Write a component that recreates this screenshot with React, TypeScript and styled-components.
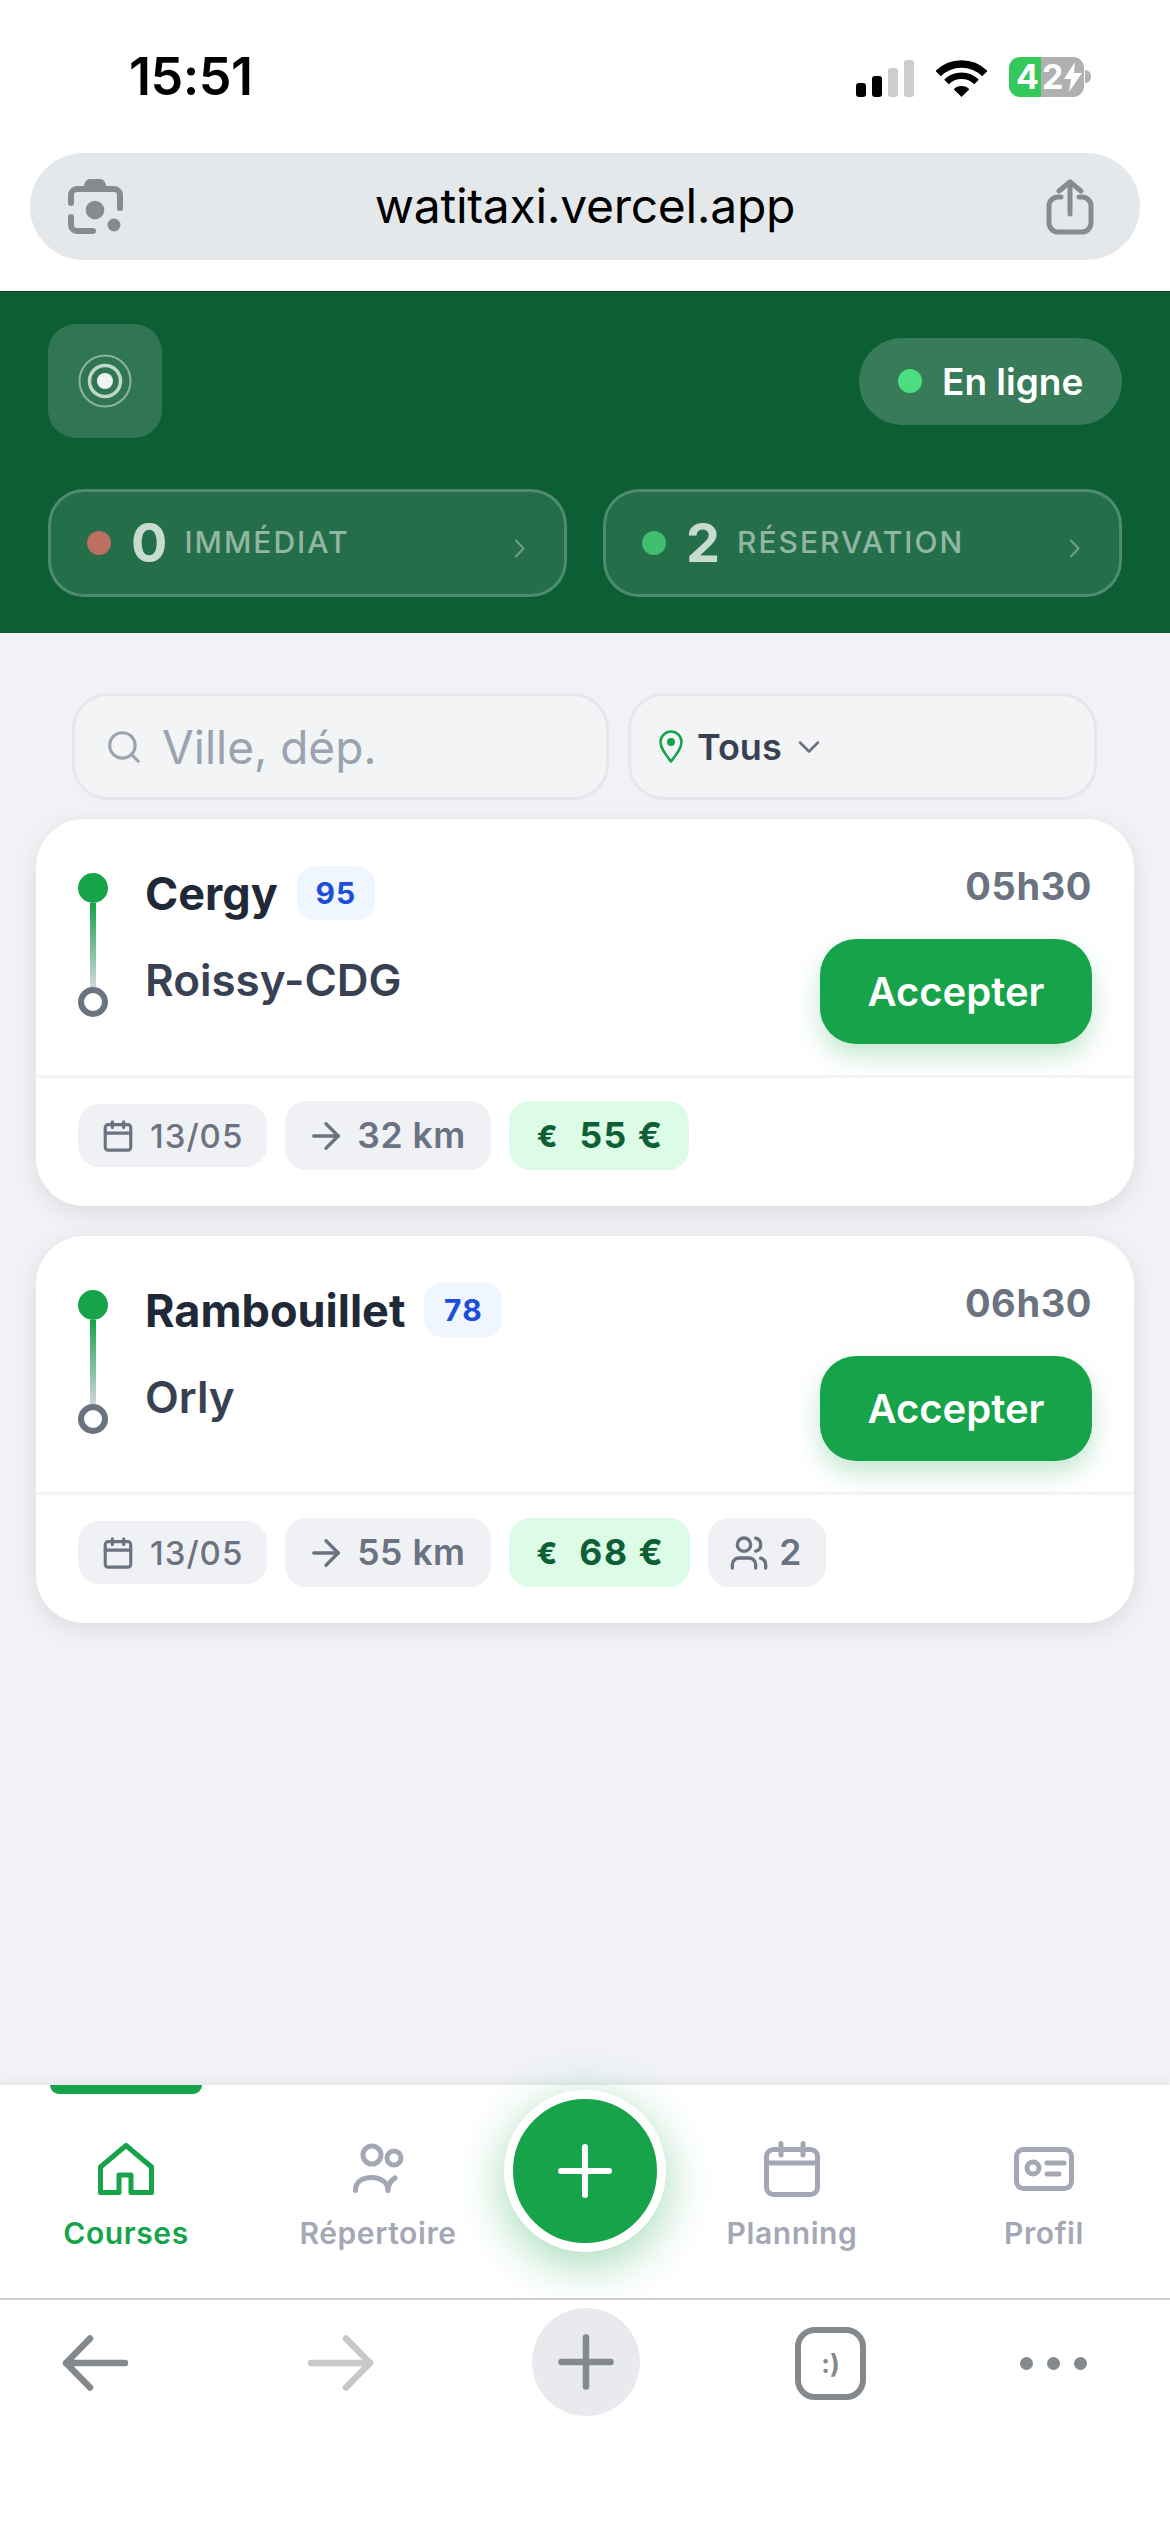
import React from "react";
import styled, { createGlobalStyle } from "styled-components";
import { ArrowRight, Calendar, ChevronDown, Search, Users } from "lucide-react";

const Global = createGlobalStyle`
  html, body { margin: 0; padding: 0; background: #fff; }
  * { box-sizing: border-box; }
  body { font-family: Inter, "Liberation Sans", sans-serif; }
`;

const Page = styled.div`
  width: 1170px;
  height: 2532px;
  display: flex;
  flex-direction: column;
  overflow: hidden;
  background: #fff;
`;

const StatusBar = styled.div`
  height: 153px;
  flex: none;
  display: flex;
  align-items: center;
  justify-content: space-between;
  padding: 0 79px 0 129px;
`;
const Clock = styled.div`
  font-size: 52px;
  font-weight: 600;
  color: #000;
  letter-spacing: -0.5px;
`;
const StatusIcons = styled.div`
  display: flex;
  align-items: flex-end;
  gap: 22px;
`;
const Signal = styled.div`
  display: flex;
  align-items: flex-end;
  gap: 6px;
  height: 37px;
`;
const SignalBar = styled.span<{ $h: number; $on?: boolean }>`
  width: 10px;
  height: ${(p) => p.$h}px;
  border-radius: 3px;
  background: ${(p) => (p.$on ? "#000" : "#cdcdcd")};
`;
const Battery = styled.div`
  display: flex;
  align-items: center;
  height: 40px;
`;
const BatteryLeft = styled.div`
  width: 32px;
  height: 40px;
  background: #34c759;
  border-radius: 11px 0 0 11px;
  color: #fff;
  font-size: 34px;
  font-weight: 700;
  line-height: 40px;
  padding-left: 7px;
`;
const BatteryRight = styled.div`
  width: 43px;
  height: 40px;
  background: #b0b0b0;
  border-radius: 0 11px 11px 0;
  color: #fff;
  font-size: 34px;
  font-weight: 700;
  line-height: 40px;
  display: flex;
  align-items: center;
  padding-left: 1px;
`;
const BatteryNub = styled.div`
  width: 6px;
  height: 13px;
  margin-left: 1px;
  border-radius: 0 6px 6px 0;
  background: #b0b0b0;
`;

const UrlWrap = styled.div`
  flex: none;
  padding: 0 30px 31px;
`;
const UrlBar = styled.div`
  height: 107px;
  border-radius: 54px;
  background: #e5e8eb;
  display: grid;
  grid-template-columns: 1fr auto 1fr;
  align-items: center;
  padding: 0 46px;
`;
const UrlLeft = styled.div`
  justify-self: start;
  display: flex;
  margin-left: -8px;
`;
const UrlText = styled.div`
  font-size: 48px;
  font-weight: 400;
  color: #000;
  letter-spacing: -0.3px;
  margin-top: -2px;
`;
const UrlRight = styled.div`
  justify-self: end;
  display: flex;
`;

const Header = styled.header`
  flex: none;
  background: #0c5f35;
  border-top: 1px solid #0a4327;
  padding: 32px 48px 36px;
`;
const HeaderTop = styled.div`
  display: flex;
  align-items: center;
  justify-content: space-between;
`;
const Logo = styled.div`
  width: 114px;
  height: 114px;
  border-radius: 28px;
  background: rgba(255, 255, 255, 0.15);
  display: flex;
  align-items: center;
  justify-content: center;
`;
const OnlinePill = styled.div`
  height: 87px;
  width: 263px;
  border-radius: 44px;
  background: rgba(255, 255, 255, 0.18);
  display: flex;
  align-items: center;
  padding-left: 39px;
  gap: 20px;
  color: #fff;
  font-size: 37px;
  font-weight: 600;
`;
const Dot = styled.span<{ $c: string; $s: number }>`
  width: ${(p) => p.$s}px;
  height: ${(p) => p.$s}px;
  border-radius: 50%;
  background: ${(p) => p.$c};
  flex: none;
`;
const Stats = styled.div`
  display: grid;
  grid-template-columns: 1fr 1fr;
  gap: 36px;
  margin-top: 51px;
`;
const StatCard = styled.div`
  height: 108px;
  border-radius: 36px;
  border: 3px solid rgba(255, 255, 255, 0.2);
  background: rgba(255, 255, 255, 0.1);
  display: flex;
  align-items: center;
  padding: 0 39px 0 36px;
`;
const StatNumber = styled.span`
  font-size: 54px;
  font-weight: 700;
  color: rgba(255, 255, 255, 0.75);
  margin-left: 20px;
  line-height: 1;
`;
const StatLabel = styled.span`
  font-size: 30px;
  font-weight: 500;
  letter-spacing: 2px;
  color: rgba(255, 255, 255, 0.5);
  margin: -2px 0 0 17px;
`;
const StatChevron = styled.svg`
  margin-left: auto;
  margin-top: 10px;
`;

const Main = styled.main`
  flex: 1;
  min-height: 0;
  background: #f0f2f6;
  padding: 60px 36px 0;
  display: flex;
  flex-direction: column;
`;
const Filters = styled.div`
  display: grid;
  grid-template-columns: 537px 469px;
  gap: 19px;
  padding: 0 36px;
  margin-bottom: 19px;
`;
const SearchBox = styled.div`
  height: 107px;
  border-radius: 36px;
  border: 3px solid #e5e7eb;
  background: #f3f4f6;
  display: flex;
  align-items: center;
  gap: 19px;
  padding-left: 30px;
  color: #9ca3af;
  font-size: 46px;
`;
const SelectBox = styled(SearchBox)`
  gap: 14px;
  padding-left: 28px;
  color: #374151;
  font-size: 36px;
  font-weight: 600;
`;
const CaretWrap = styled.span`
  display: flex;
  margin-left: -5px;
  color: #6b7280;
`;
const Card = styled.article`
  background: #fff;
  border-radius: 48px;
  box-shadow: 0 6px 24px rgba(0, 0, 0, 0.09);
  margin-bottom: 30px;
`;
const CardTop = styled.div`
  height: 259px;
  padding: 47px 42px 0;
  display: flex;
  border-bottom: 3px solid #f3f4f6;
`;
const Route = styled.div`
  width: 30px;
  height: 144px;
  margin-top: 7px;
  display: flex;
  flex-direction: column;
  align-items: center;
  flex: none;
`;
const RouteStart = styled.span`
  width: 30px;
  height: 30px;
  border-radius: 50%;
  background: #16a34a;
  flex: none;
`;
const RouteLine = styled.span`
  width: 6px;
  flex: 1;
  background: linear-gradient(#16a34a, #d1d5db);
`;
const RouteEnd = styled.span`
  width: 30px;
  height: 30px;
  border-radius: 50%;
  border: 6px solid #6b7280;
  background: #fff;
  flex: none;
`;
const Places = styled.div`
  margin-left: 37px;
  flex: 1;
`;
const CityRow = styled.div`
  display: flex;
  align-items: center;
  gap: 19px;
  height: 54px;
`;
const City = styled.span`
  font-size: 45px;
  font-weight: 700;
  color: #1f2937;
`;
const Dept = styled.span`
  height: 54px;
  width: 78px;
  border-radius: 18px;
  background: #eff6ff;
  color: #1d4ed8;
  font-size: 30px;
  font-weight: 700;
  letter-spacing: 1px;
  display: flex;
  align-items: center;
  justify-content: center;
`;
const Destination = styled.div`
  margin-top: 33px;
  height: 54px;
  line-height: 54px;
  font-size: 44px;
  font-weight: 600;
  color: #374151;
`;
const Side = styled.div`
  display: flex;
  flex-direction: column;
  align-items: flex-end;
`;
const Time = styled.div`
  height: 44px;
  line-height: 44px;
  margin-top: -2px;
  font-size: 38px;
  font-weight: 700;
  letter-spacing: 0.6px;
  color: #6b7280;
`;
const Accept = styled.button`
  margin-top: 31px;
  width: 272px;
  height: 105px;
  border: 0;
  border-radius: 36px;
  background: #16a34a;
  color: #fff;
  font-family: inherit;
  font-size: 40px;
  font-weight: 600;
  box-shadow: 0 12px 24px rgba(22, 163, 74, 0.25);
`;
const Tags = styled.div`
  padding: 23px 42px 36px;
  display: flex;
  align-items: center;
  gap: 18px;
`;
const Tag = styled.span`
  height: 69px;
  padding: 0 25px 0 20px;
  border-radius: 21px;
  background: #f0f1f5;
  color: #6b7280;
  display: flex;
  align-items: center;
  gap: 10px;
  font-size: 35.5px;
  font-weight: 600;
  letter-spacing: 0.5px;
`;
const DateTag = styled(Tag)`
  height: 63px;
  padding: 0 24px 0 23px;
  font-size: 33px;
  font-weight: 500;
  letter-spacing: 1px;
  gap: 15px;
`;
const PriceTag = styled(Tag)`
  background: #dcfce7;
  color: #0f5f35;
  font-weight: 700;
  letter-spacing: 1.5px;
  padding: 0 26px 0 28px;
  gap: 22px;
`;
const PeopleTag = styled(Tag)`
  padding: 0 24px 0 21px;
  gap: 10px;
`;
const EuroMark = styled.span`
  font-size: 30px;
  font-weight: 800;
  letter-spacing: 0;
`;

const Nav = styled.nav`
  flex: none;
  height: 213px;
  background: #fff;
  display: flex;
  align-items: flex-start;
  box-shadow: 0 -3px 12px rgba(0, 0, 0, 0.05);
  position: relative;
`;
const NavItem = styled.div<{ $active?: boolean }>`
  flex: 1;
  position: relative;
  padding-top: 56px;
  display: flex;
  flex-direction: column;
  align-items: center;
  color: ${(p) => (p.$active ? "#16a34a" : "#a3a8b4")};
`;
const NavIndicator = styled.span`
  position: absolute;
  top: 0;
  left: 50px;
  width: 152px;
  height: 9px;
  border-radius: 0 0 9px 9px;
  background: #16a34a;
`;
const NavIcon = styled.span`
  height: 56px;
  display: flex;
  align-items: center;
  justify-content: center;
`;
const NavLabel = styled.span`
  margin-top: 18px;
  font-size: 30px;
  line-height: 36px;
  font-weight: 600;
  letter-spacing: 0.6px;
`;
const Fab = styled.button`
  flex: none;
  width: 162px;
  height: 162px;
  margin-top: 5px;
  border-radius: 50%;
  border: 9px solid #fff;
  background: #16a34a;
  padding: 0;
  display: flex;
  align-items: center;
  justify-content: center;
  box-shadow: 0 12px 48px rgba(22, 163, 74, 0.4);
  position: relative;
  z-index: 1;
`;

const Toolbar = styled.div`
  flex: none;
  height: 234px;
  position: relative;
  z-index: 2;
  background: #fff;
  border-top: 2px solid #cfcfcf;
  display: flex;
  align-items: flex-start;
  padding: 8px 0 0 62px;
`;
const ToolSlot = styled.div<{ $gap: number }>`
  height: 108px;
  margin-left: ${(p) => p.$gap}px;
  padding-top: 2px;
  display: flex;
  align-items: center;
`;
const PlusCircle = styled(ToolSlot)`
  width: 108px;
  padding-top: 0;
  border-radius: 50%;
  background: #e9eaee;
  justify-content: center;
`;
const TabsBox = styled.div`
  width: 71px;
  height: 73px;
  border: 6px solid #83898c;
  border-radius: 20px;
  color: #83898c;
  font-size: 26px;
  font-weight: 700;
  display: flex;
  align-items: center;
  justify-content: center;
`;
const MoreSlot = styled(ToolSlot)`
  gap: 14px;
`;
const MoreDot = styled.span`
  width: 13px;
  height: 13px;
  border-radius: 50%;
  background: #83898c;
`;

const BoltIcon = () => (
  <svg width="18" height="30" viewBox="0 0 18 30" style={{ marginLeft: 1 }}>
    <path d="M11 0 L0 17 H7 L5 30 L18 11 H10 Z" fill="#fff" />
  </svg>
);

const WifiIcon = () => (
  <svg width="51" height="37" viewBox="0 0 51 37" fill="none" stroke="#000">
    <path d="M2.2 13.7 A33 33 0 0 1 48.8 13.7" strokeWidth="7.5" />
    <path d="M10.5 22 A21.2 21.2 0 0 1 40.5 22" strokeWidth="6.5" />
    <path d="M25.5 37 L17.7 29.2 A11 11 0 0 1 33.3 29.2 Z" fill="#000" stroke="none" />
  </svg>
);

const LensIcon = () => (
  <svg width="55" height="56" viewBox="0 0 55 56" fill="none" stroke="#858c90" strokeWidth="6" strokeLinecap="round">
    <path d="M3 24 V16 a6 6 0 0 1 6-6 H46 a6 6 0 0 1 6 6 V29" />
    <path d="M3 38 V46 a6 6 0 0 0 6 6 H25" />
    <path d="M15 10 C16 4 18 0 22 0 H32 C36 0 38 4 39 10 Z" fill="#858c90" stroke="none" />
    <circle cx="27" cy="31" r="9.3" fill="#858c90" stroke="none" />
    <circle cx="46" cy="46" r="6.5" fill="#858c90" stroke="none" />
  </svg>
);

const ShareIcon = () => (
  <svg width="48" height="56" viewBox="0 0 48 56" fill="none" stroke="#858c90" strokeWidth="5" strokeLinecap="round" strokeLinejoin="round">
    <path d="M15 18 H12 a9 9 0 0 0 -9 9 V44 a9 9 0 0 0 9 9 H36 a9 9 0 0 0 9 -9 V27 a9 9 0 0 0 -9 -9 H33" />
    <path d="M24 35 V3" />
    <path d="M13 12 L24 3 L35 12" />
  </svg>
);

const RadarIcon = () => (
  <svg width="56" height="56" viewBox="0 0 56 56" fill="none">
    <circle cx="28" cy="28" r="25.5" stroke="#fff" strokeOpacity=".45" strokeWidth="2" />
    <circle cx="28" cy="28" r="15.5" stroke="#fff" strokeOpacity=".7" strokeWidth="3.5" />
    <circle cx="28" cy="28" r="8" fill="#fff" fillOpacity=".92" />
  </svg>
);

const SmallChevron = () => (
  <StatChevron width="11" height="19" viewBox="0 0 11 19" fill="none" stroke="rgba(255,255,255,.35)" strokeWidth="2">
    <path d="M1.5 1 L9.5 9.5 L1.5 18" />
  </StatChevron>
);

const PinIcon = () => (
  <svg width="24" height="33" viewBox="0 0 24 33" fill="none" stroke="#16a34a" strokeWidth="2.5" strokeLinejoin="round">
    <path d="M12 31.5 C7 25 1.5 18.5 1.5 12 A10.5 10.5 0 0 1 22.5 12 C22.5 18.5 17 25 12 31.5 Z" />
    <circle cx="12" cy="12" r="4" fill="#16a34a" stroke="none" />
  </svg>
);

const HomeIcon = () => (
  <svg width="56" height="52" viewBox="0 0 56 52" fill="none" stroke="currentColor" strokeWidth="5" strokeLinejoin="round">
    <path d="M28 2.5 L53.5 24 V49.5 H33 V32 H21 V49.5 H2.5 V24 Z" />
  </svg>
);
const PeopleIcon = () => (
  <svg width="52" height="52" viewBox="0 0 52 52" fill="none" stroke="currentColor" strokeWidth="5" strokeLinecap="round">
    <circle cx="20" cy="12" r="9" />
    <circle cx="42" cy="15" r="7" />
    <path d="M3.5 47.5 C3.5 39 10 34.5 20 34.5 C28 34.5 36 39 36 47.5" />
    <path d="M36 47 C36 42 38 38 43 35" />
  </svg>
);
const PlanIcon = () => (
  <svg width="56" height="56" viewBox="0 0 56 56" fill="none" stroke="currentColor" strokeWidth="5" strokeLinecap="round">
    <rect x="2.5" y="8.5" width="51" height="45" rx="7" />
    <path d="M2.5 22 H53.5" />
    <path d="M17 2.5 V14 M39 2.5 V14" />
  </svg>
);
const ProfileIcon = () => (
  <svg width="60" height="44" viewBox="0 0 60 44" fill="none" stroke="currentColor" strokeWidth="5" strokeLinecap="round">
    <rect x="2.5" y="2.5" width="55" height="39" rx="7" />
    <circle cx="19" cy="21" r="6" />
    <path d="M33 16 H50 M33 27 H45" />
  </svg>
);
const WhitePlus = () => (
  <svg width="54" height="54" viewBox="0 0 54 54" fill="none" stroke="#fff" strokeWidth="6" strokeLinecap="round">
    <path d="M27 3 V51 M3 27 H51" />
  </svg>
);
const BackIcon = ({ color, flip }: { color: string; flip?: boolean }) => (
  <svg width="67" height="56" viewBox="0 0 67 56" fill="none" stroke={color} strokeWidth="6.5" strokeLinecap="round" strokeLinejoin="round" style={flip ? { transform: "scaleX(-1)" } : undefined}>
    <path d="M63 28 H4 M28 3.5 L4 28 L28 52.5" />
  </svg>
);
const GreyPlus = () => (
  <svg width="56" height="56" viewBox="0 0 56 56" fill="none" stroke="#83898c" strokeWidth="6.5" strokeLinecap="round">
    <path d="M28 3.5 V52.5 M3.5 28 H52.5" />
  </svg>
);

type Trip = {
  from: string;
  dept: string;
  to: string;
  time: string;
  km: string;
  price: string;
  people?: string;
};
const trips: Trip[] = [
  { from: "Cergy", dept: "95", to: "Roissy-CDG", time: "05h30", km: "32 km", price: "55 €" },
  { from: "Rambouillet", dept: "78", to: "Orly", time: "06h30", km: "55 km", price: "68 €", people: "2" },
];

const TripCard = ({ trip }: { trip: Trip }) => (
  <Card>
    <CardTop>
      <Route>
        <RouteStart />
        <RouteLine />
        <RouteEnd />
      </Route>
      <Places>
        <CityRow>
          <City>{trip.from}</City>
          <Dept>{trip.dept}</Dept>
        </CityRow>
        <Destination>{trip.to}</Destination>
      </Places>
      <Side>
        <Time>{trip.time}</Time>
        <Accept>Accepter</Accept>
      </Side>
    </CardTop>
    <Tags>
      <DateTag>
        <Calendar size={34} strokeWidth={2.2} />
        13/05
      </DateTag>
      <Tag>
        <ArrowRight size={42} strokeWidth={1.9} />
        {trip.km}
      </Tag>
      <PriceTag>
        <EuroMark>€</EuroMark>
        {trip.price}
      </PriceTag>
      {trip.people && (
        <PeopleTag>
          <Users size={40} strokeWidth={2} />
          {trip.people}
        </PeopleTag>
      )}
    </Tags>
  </Card>
);

export default function App() {
  return (
    <Page>
      <Global />
      <StatusBar>
        <Clock>15:51</Clock>
        <StatusIcons>
          <Signal>
            <SignalBar $h={14} $on />
            <SignalBar $h={21} $on />
            <SignalBar $h={29} />
            <SignalBar $h={37} />
          </Signal>
          <WifiIcon />
          <Battery>
            <BatteryLeft>4</BatteryLeft>
            <BatteryRight>
              2
              <BoltIcon />
            </BatteryRight>
            <BatteryNub />
          </Battery>
        </StatusIcons>
      </StatusBar>
      <UrlWrap>
        <UrlBar>
          <UrlLeft>
            <LensIcon />
          </UrlLeft>
          <UrlText>watitaxi.vercel.app</UrlText>
          <UrlRight>
            <ShareIcon />
          </UrlRight>
        </UrlBar>
      </UrlWrap>
      <Header>
        <HeaderTop>
          <Logo>
            <RadarIcon />
          </Logo>
          <OnlinePill>
            <Dot $c="#4ade80" $s={24} />
            En ligne
          </OnlinePill>
        </HeaderTop>
        <Stats>
          <StatCard>
            <Dot $c="#bd6f62" $s={24} />
            <StatNumber>0</StatNumber>
            <StatLabel>IMMÉDIAT</StatLabel>
            <SmallChevron />
          </StatCard>
          <StatCard>
            <Dot $c="#3fbf6f" $s={24} />
            <StatNumber>2</StatNumber>
            <StatLabel>RÉSERVATION</StatLabel>
            <SmallChevron />
          </StatCard>
        </Stats>
      </Header>
      <Main>
        <Filters>
          <SearchBox>
            <Search size={38} strokeWidth={2} />
            Ville, dép.
          </SearchBox>
          <SelectBox>
            <PinIcon />
            Tous
            <CaretWrap>
              <ChevronDown size={36} strokeWidth={1.7} />
            </CaretWrap>
          </SelectBox>
        </Filters>
        {trips.map((t) => (
          <TripCard key={t.from} trip={t} />
        ))}
      </Main>
      <Nav>
        <NavItem $active>
          <NavIndicator />
          <NavIcon>
            <HomeIcon />
          </NavIcon>
          <NavLabel>Courses</NavLabel>
        </NavItem>
        <NavItem>
          <NavIcon>
            <PeopleIcon />
          </NavIcon>
          <NavLabel>Répertoire</NavLabel>
        </NavItem>
        <Fab>
          <WhitePlus />
        </Fab>
        <NavItem>
          <NavIcon>
            <PlanIcon />
          </NavIcon>
          <NavLabel>Planning</NavLabel>
        </NavItem>
        <NavItem>
          <NavIcon>
            <ProfileIcon />
          </NavIcon>
          <NavLabel>Profil</NavLabel>
        </NavItem>
      </Nav>
      <Toolbar>
        <ToolSlot $gap={0}>
          <BackIcon color="#83898c" />
        </ToolSlot>
        <ToolSlot $gap={178}>
          <BackIcon color="#c8c8c8" flip />
        </ToolSlot>
        <PlusCircle $gap={158}>
          <GreyPlus />
        </PlusCircle>
        <ToolSlot $gap={155}>
          <TabsBox>:)</TabsBox>
        </ToolSlot>
        <MoreSlot $gap={154}>
          <MoreDot />
          <MoreDot />
          <MoreDot />
        </MoreSlot>
      </Toolbar>
    </Page>
  );
}
